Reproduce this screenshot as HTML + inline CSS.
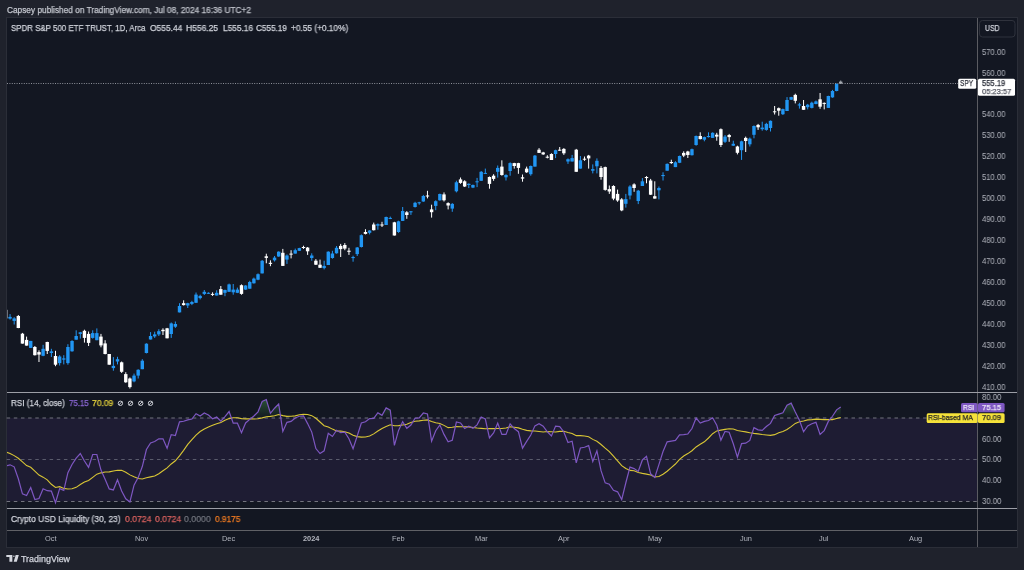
<!DOCTYPE html>
<html><head><meta charset="utf-8">
<style>
*{margin:0;padding:0;box-sizing:border-box}
html,body{width:1024px;height:570px;overflow:hidden;background:#1f222c;font-family:"Liberation Sans",sans-serif}
.abs{position:absolute}
.t{position:absolute;white-space:pre;line-height:12px;transform-origin:0 50%;will-change:transform;-webkit-text-stroke:0.25px currentColor}
.frame{position:absolute;left:6px;top:17px;width:1012px;height:531px;background:#131722;border:1px solid #2b2e38}
svg{position:absolute;left:0;top:0}
.ns{-webkit-text-stroke:0}
</style></head><body>
<div class="frame"></div>

<svg width="1024" height="570" viewBox="0 0 1024 570">
  <defs><clipPath id="cm"><rect x="7" y="18" width="970" height="374"/></clipPath>
  <linearGradient id="gg" gradientUnits="userSpaceOnUse" x1="0" y1="370" x2="0" y2="418"><stop offset="0" stop-color="#4caf50" stop-opacity="1"/><stop offset="1" stop-color="#4caf50" stop-opacity="0"/></linearGradient>
  <clipPath id="cover"><rect x="7" y="393" width="970" height="25"/></clipPath>
  <clipPath id="cr"><rect x="7" y="393" width="970" height="115"/></clipPath></defs>
  <!-- RSI band -->
  <rect x="7" y="418" width="970" height="83.3" fill="#1e1c33"/>
  <line x1="6.65" y1="418" x2="977" y2="418" stroke="#73747e" stroke-width="1" stroke-dasharray="3.5,3.66"/>
  <line x1="6.65" y1="459.5" x2="977" y2="459.5" stroke="#5a5b6c" stroke-width="1" stroke-dasharray="3.5,3.66"/>
  <line x1="6.65" y1="501.5" x2="977" y2="501.5" stroke="#73747e" stroke-width="1" stroke-dasharray="3.5,3.66"/>
  <g clip-path="url(#cover)"><polygon points="5.92,418 5.92,465.77 10.05,464.81 14.18,466.82 18.32,478.77 22.45,493.86 26.58,495.54 30.72,487.53 34.85,499.56 38.98,498.54 43.11,488.72 47.25,490.67 51.38,491.06 55.51,502.78 59.65,488.63 63.78,490.39 67.91,472.66 72.04,464.53 76.18,458.13 80.31,453.55 84.44,461.01 88.58,467.29 92.71,454.48 96.84,454.48 100.97,470.08 105.11,479.18 109.24,488.92 113.37,489.95 117.50,479.69 121.64,490.94 125.77,498.75 129.90,502.01 134.04,485.21 138.17,477.60 142.30,466.58 146.43,449.50 150.57,442.93 154.70,441.58 158.83,438.82 162.97,438.82 167.10,448.32 171.23,434.65 175.36,435.47 179.50,421.84 183.63,421.23 187.76,419.90 191.90,419.02 196.03,413.75 200.16,416.06 204.29,413.03 208.43,414.97 212.56,418.79 216.69,417.08 220.82,421.20 224.96,416.59 229.09,411.54 233.22,423.10 237.36,423.10 241.49,432.64 245.62,422.96 249.75,419.35 253.89,415.97 258.02,411.81 262.15,401.43 266.29,399.53 270.42,413.26 274.55,408.23 278.68,403.97 282.82,431.46 286.95,422.34 291.08,421.44 295.22,417.96 299.35,416.24 303.48,415.81 307.61,423.61 311.75,432.09 315.88,448.55 320.01,453.55 324.14,450.81 328.28,433.30 332.41,436.48 336.54,430.23 340.68,432.70 344.81,432.11 348.94,438.68 353.07,448.71 357.21,435.96 361.34,423.04 365.47,421.83 369.61,418.63 373.74,418.34 377.87,412.72 382.00,415.33 386.14,407.92 390.27,410.12 394.40,445.43 398.54,430.40 402.67,421.73 406.80,428.26 410.93,425.06 415.07,418.22 419.20,417.84 423.33,413.00 427.46,413.99 431.60,441.13 435.73,430.78 439.86,424.87 444.00,434.40 448.13,441.84 452.26,440.22 456.39,422.03 460.53,422.93 464.66,428.48 468.79,426.22 472.93,428.22 477.06,424.85 481.19,416.96 485.32,419.00 489.46,437.87 493.59,432.91 497.72,423.23 501.86,434.42 505.99,434.42 510.12,423.79 514.25,428.55 518.39,431.71 522.52,448.15 526.65,441.35 530.78,435.05 534.92,425.87 539.05,423.67 543.18,426.23 547.32,431.77 551.45,435.94 555.58,426.09 559.71,426.64 563.85,431.94 567.98,442.58 572.11,441.18 576.25,462.78 580.38,448.00 584.51,447.29 588.64,445.67 592.78,461.58 596.91,450.82 601.04,470.64 605.18,482.83 609.31,484.22 613.44,490.26 617.57,491.84 621.71,499.56 625.84,482.76 629.97,467.11 634.10,468.60 638.24,471.38 642.37,459.93 646.50,456.28 650.64,473.82 654.77,477.38 658.90,464.68 663.03,451.46 667.17,441.84 671.30,441.17 675.43,440.46 679.57,434.90 683.70,434.55 687.83,433.98 691.96,428.54 696.10,417.92 700.23,423.07 704.36,421.44 708.50,420.51 712.63,417.77 716.76,425.20 720.89,440.19 725.03,431.32 729.16,432.20 733.29,443.71 737.42,457.21 741.56,443.54 745.69,443.21 749.82,440.45 753.96,427.62 758.09,429.86 762.22,430.41 766.35,426.55 770.49,423.39 774.62,415.50 778.75,414.12 782.89,412.70 787.02,405.30 791.15,403.18 795.28,411.99 799.42,420.23 803.55,431.81 807.68,426.00 811.82,423.80 815.95,422.34 820.08,434.42 824.21,430.62 828.35,421.41 832.48,416.26 836.61,409.85 840.74,406.94 840.74,418" fill="url(#gg)"/></g>
  <g clip-path="url(#cr)">
  <polyline points="5.92,451.81 10.05,453.61 14.18,455.62 18.32,458.27 22.45,461.92 26.58,465.54 30.72,467.32 34.85,471.07 38.98,475.06 43.11,477.14 47.25,479.82 51.38,484.31 55.51,487.48 59.65,486.65 63.78,488.41 67.91,488.97 72.04,488.80 76.18,487.33 80.31,484.45 84.44,481.98 88.58,480.54 92.71,477.32 96.84,474.17 100.97,472.84 105.11,472.02 109.24,471.87 113.37,470.95 117.50,470.31 121.64,470.35 125.77,472.21 129.90,474.89 134.04,476.82 138.17,478.54 142.30,478.94 146.43,477.67 150.57,476.84 154.70,475.92 158.83,473.69 162.97,470.81 167.10,467.91 171.23,463.96 175.36,460.80 179.50,455.86 183.63,450.33 187.76,444.46 191.90,439.73 196.03,435.17 200.16,431.56 204.29,428.96 208.43,426.96 212.56,425.33 216.69,423.78 220.82,422.52 224.96,420.26 229.09,418.61 233.22,417.72 237.36,417.81 241.49,418.63 245.62,418.85 249.75,418.87 253.89,419.03 258.02,418.72 262.15,417.90 266.29,416.79 270.42,416.40 274.55,415.77 278.68,414.53 282.82,415.60 286.95,416.37 291.08,416.25 295.22,415.88 299.35,414.71 303.48,414.20 307.61,414.50 311.75,415.66 315.88,418.28 320.01,422.00 324.14,425.67 328.28,427.10 332.41,429.12 336.54,430.99 340.68,431.08 344.81,431.78 348.94,433.01 353.07,435.21 357.21,436.61 361.34,437.13 365.47,437.00 369.61,436.04 373.74,433.88 377.87,430.97 382.00,428.43 386.14,426.62 390.27,424.74 394.40,425.82 398.54,425.66 402.67,424.92 406.80,424.17 410.93,422.48 415.07,421.22 419.20,420.84 423.33,420.21 427.46,419.88 431.60,421.51 435.73,422.80 439.86,423.48 444.00,425.37 448.13,427.64 452.26,427.27 456.39,426.67 460.53,426.75 464.66,426.77 468.79,426.85 472.93,427.57 477.06,428.07 481.19,428.35 485.32,428.71 489.46,428.48 493.59,428.63 497.72,428.51 501.86,428.51 505.99,427.98 510.12,426.81 514.25,427.27 518.39,427.90 522.52,429.31 526.65,430.39 530.78,430.87 534.92,430.95 539.05,431.43 543.18,431.94 547.32,431.51 551.45,431.72 555.58,431.93 559.71,431.37 563.85,431.20 567.98,432.54 572.11,433.44 576.25,435.66 580.38,435.65 584.51,436.07 588.64,436.83 592.78,439.38 596.91,441.32 601.04,444.49 605.18,448.14 609.31,451.59 613.44,456.17 617.57,460.83 621.71,465.66 625.84,468.53 629.97,470.38 634.10,470.80 638.24,472.47 642.37,473.37 646.50,474.13 650.64,475.00 654.77,476.90 658.90,476.48 663.03,474.23 667.17,471.21 671.30,467.70 675.43,464.03 679.57,459.41 683.70,455.97 687.83,453.60 691.96,450.74 696.10,446.92 700.23,444.29 704.36,441.80 708.50,437.99 712.63,433.73 716.76,430.91 720.89,430.11 725.03,429.36 729.16,428.72 733.29,428.95 737.42,430.54 741.56,431.19 745.69,431.85 749.82,432.70 753.96,433.39 758.09,433.87 762.22,434.52 766.35,434.95 770.49,435.35 774.62,434.65 778.75,432.79 782.89,431.46 787.02,429.54 791.15,426.65 795.28,423.42 799.42,421.75 803.55,420.94 807.68,419.90 811.82,419.63 815.95,419.09 820.08,419.38 824.21,419.67 828.35,419.53 832.48,419.58 836.61,418.55 840.74,417.51" fill="none" stroke="#d9c635" stroke-width="1.1"/>
  <polyline points="5.92,465.77 10.05,464.81 14.18,466.82 18.32,478.77 22.45,493.86 26.58,495.54 30.72,487.53 34.85,499.56 38.98,498.54 43.11,488.72 47.25,490.67 51.38,491.06 55.51,502.78 59.65,488.63 63.78,490.39 67.91,472.66 72.04,464.53 76.18,458.13 80.31,453.55 84.44,461.01 88.58,467.29 92.71,454.48 96.84,454.48 100.97,470.08 105.11,479.18 109.24,488.92 113.37,489.95 117.50,479.69 121.64,490.94 125.77,498.75 129.90,502.01 134.04,485.21 138.17,477.60 142.30,466.58 146.43,449.50 150.57,442.93 154.70,441.58 158.83,438.82 162.97,438.82 167.10,448.32 171.23,434.65 175.36,435.47 179.50,421.84 183.63,421.23 187.76,419.90 191.90,419.02 196.03,413.75 200.16,416.06 204.29,413.03 208.43,414.97 212.56,418.79 216.69,417.08 220.82,421.20 224.96,416.59 229.09,411.54 233.22,423.10 237.36,423.10 241.49,432.64 245.62,422.96 249.75,419.35 253.89,415.97 258.02,411.81 262.15,401.43 266.29,399.53 270.42,413.26 274.55,408.23 278.68,403.97 282.82,431.46 286.95,422.34 291.08,421.44 295.22,417.96 299.35,416.24 303.48,415.81 307.61,423.61 311.75,432.09 315.88,448.55 320.01,453.55 324.14,450.81 328.28,433.30 332.41,436.48 336.54,430.23 340.68,432.70 344.81,432.11 348.94,438.68 353.07,448.71 357.21,435.96 361.34,423.04 365.47,421.83 369.61,418.63 373.74,418.34 377.87,412.72 382.00,415.33 386.14,407.92 390.27,410.12 394.40,445.43 398.54,430.40 402.67,421.73 406.80,428.26 410.93,425.06 415.07,418.22 419.20,417.84 423.33,413.00 427.46,413.99 431.60,441.13 435.73,430.78 439.86,424.87 444.00,434.40 448.13,441.84 452.26,440.22 456.39,422.03 460.53,422.93 464.66,428.48 468.79,426.22 472.93,428.22 477.06,424.85 481.19,416.96 485.32,419.00 489.46,437.87 493.59,432.91 497.72,423.23 501.86,434.42 505.99,434.42 510.12,423.79 514.25,428.55 518.39,431.71 522.52,448.15 526.65,441.35 530.78,435.05 534.92,425.87 539.05,423.67 543.18,426.23 547.32,431.77 551.45,435.94 555.58,426.09 559.71,426.64 563.85,431.94 567.98,442.58 572.11,441.18 576.25,462.78 580.38,448.00 584.51,447.29 588.64,445.67 592.78,461.58 596.91,450.82 601.04,470.64 605.18,482.83 609.31,484.22 613.44,490.26 617.57,491.84 621.71,499.56 625.84,482.76 629.97,467.11 634.10,468.60 638.24,471.38 642.37,459.93 646.50,456.28 650.64,473.82 654.77,477.38 658.90,464.68 663.03,451.46 667.17,441.84 671.30,441.17 675.43,440.46 679.57,434.90 683.70,434.55 687.83,433.98 691.96,428.54 696.10,417.92 700.23,423.07 704.36,421.44 708.50,420.51 712.63,417.77 716.76,425.20 720.89,440.19 725.03,431.32 729.16,432.20 733.29,443.71 737.42,457.21 741.56,443.54 745.69,443.21 749.82,440.45 753.96,427.62 758.09,429.86 762.22,430.41 766.35,426.55 770.49,423.39 774.62,415.50 778.75,414.12 782.89,412.70 787.02,405.30 791.15,403.18 795.28,411.99 799.42,420.23 803.55,431.81 807.68,426.00 811.82,423.80 815.95,422.34 820.08,434.42 824.21,430.62 828.35,421.41 832.48,416.26 836.61,409.85 840.74,406.94" fill="none" stroke="#7e57c2" stroke-width="1.2"/>
  </g>
  <!-- separators -->
  <line x1="977.5" y1="18" x2="977.5" y2="547" stroke="#5b5c62" stroke-width="1"/>
  <line x1="7" y1="392.5" x2="1017" y2="392.5" stroke="#9c9ea6" stroke-width="1"/>
  <line x1="7" y1="508.5" x2="1017" y2="508.5" stroke="#9c9ea6" stroke-width="1"/>
  <line x1="7" y1="530.5" x2="1017" y2="530.5" stroke="#606166" stroke-width="1"/>
  <!-- dotted price line -->
  <line x1="7" y1="83.5" x2="958" y2="83.5" stroke="#8d9099" stroke-width="1" stroke-dasharray="1,1.4"/>
  <g clip-path="url(#cm)">
<rect x="5.42" y="309.80" width="1" height="8.60" fill="#a4a8b0"/>
<rect x="4.22" y="309.80" width="3.4" height="8.60" fill="#a4a8b0"/>
<rect x="9.55" y="314.10" width="1" height="5.50" fill="#2196f3"/>
<rect x="8.35" y="316.90" width="3.4" height="1.70" fill="#2196f3"/>
<rect x="13.68" y="317.20" width="1" height="7.30" fill="#2196f3"/>
<rect x="12.48" y="318.40" width="3.4" height="2.50" fill="#2196f3"/>
<rect x="17.82" y="315.00" width="1" height="13.20" fill="#ffffff"/>
<rect x="16.62" y="316.00" width="3.4" height="12.00" fill="#ffffff"/>
<rect x="21.95" y="332.90" width="1" height="10.70" fill="#ffffff"/>
<rect x="20.75" y="333.70" width="3.4" height="9.90" fill="#ffffff"/>
<rect x="26.08" y="336.60" width="1" height="9.00" fill="#ffffff"/>
<rect x="24.88" y="339.90" width="3.4" height="5.70" fill="#ffffff"/>
<rect x="30.22" y="340.90" width="1" height="7.00" fill="#2196f3"/>
<rect x="29.02" y="340.90" width="3.4" height="7.00" fill="#2196f3"/>
<rect x="34.35" y="346.00" width="1" height="9.50" fill="#ffffff"/>
<rect x="33.15" y="347.00" width="3.4" height="8.20" fill="#ffffff"/>
<rect x="38.48" y="350.30" width="1" height="11.70" fill="#ffffff"/>
<rect x="37.28" y="352.10" width="3.4" height="2.50" fill="#ffffff"/>
<rect x="42.61" y="344.80" width="1" height="11.40" fill="#2196f3"/>
<rect x="41.41" y="348.80" width="3.4" height="7.00" fill="#2196f3"/>
<rect x="46.75" y="341.70" width="1" height="12.30" fill="#ffffff"/>
<rect x="45.55" y="342.00" width="3.4" height="8.90" fill="#ffffff"/>
<rect x="50.88" y="348.80" width="1" height="8.20" fill="#2196f3"/>
<rect x="49.68" y="351.30" width="3.4" height="1.70" fill="#2196f3"/>
<rect x="55.01" y="350.80" width="1" height="15.40" fill="#ffffff"/>
<rect x="53.81" y="356.00" width="3.4" height="8.70" fill="#ffffff"/>
<rect x="59.15" y="355.20" width="1" height="10.30" fill="#2196f3"/>
<rect x="57.95" y="356.50" width="3.4" height="6.60" fill="#2196f3"/>
<rect x="63.28" y="355.20" width="1" height="9.20" fill="#2196f3"/>
<rect x="62.08" y="358.40" width="3.4" height="1.20" fill="#2196f3"/>
<rect x="67.41" y="344.20" width="1" height="20.50" fill="#2196f3"/>
<rect x="66.21" y="347.00" width="3.4" height="16.10" fill="#2196f3"/>
<rect x="71.54" y="340.20" width="1" height="11.50" fill="#2196f3"/>
<rect x="70.34" y="341.00" width="3.4" height="10.30" fill="#2196f3"/>
<rect x="75.68" y="330.30" width="1" height="9.40" fill="#2196f3"/>
<rect x="74.48" y="336.00" width="3.4" height="3.70" fill="#2196f3"/>
<rect x="79.81" y="331.90" width="1" height="6.70" fill="#2196f3"/>
<rect x="78.61" y="332.30" width="3.4" height="1.60" fill="#2196f3"/>
<rect x="83.94" y="329.70" width="1" height="12.90" fill="#ffffff"/>
<rect x="82.74" y="330.80" width="3.4" height="7.10" fill="#ffffff"/>
<rect x="88.08" y="331.50" width="1" height="14.50" fill="#ffffff"/>
<rect x="86.88" y="333.90" width="3.4" height="9.00" fill="#ffffff"/>
<rect x="92.21" y="330.30" width="1" height="8.30" fill="#2196f3"/>
<rect x="91.01" y="333.10" width="3.4" height="4.80" fill="#2196f3"/>
<rect x="96.34" y="328.40" width="1" height="11.80" fill="#2196f3"/>
<rect x="95.14" y="333.10" width="3.4" height="7.10" fill="#2196f3"/>
<rect x="100.47" y="333.90" width="1" height="13.40" fill="#ffffff"/>
<rect x="99.27" y="336.60" width="3.4" height="8.80" fill="#ffffff"/>
<rect x="104.61" y="340.20" width="1" height="14.20" fill="#ffffff"/>
<rect x="103.41" y="343.40" width="3.4" height="10.60" fill="#ffffff"/>
<rect x="108.74" y="354.00" width="1" height="10.70" fill="#ffffff"/>
<rect x="107.54" y="354.00" width="3.4" height="10.70" fill="#ffffff"/>
<rect x="112.87" y="357.10" width="1" height="13.60" fill="#2196f3"/>
<rect x="111.67" y="365.90" width="3.4" height="2.20" fill="#2196f3"/>
<rect x="117.00" y="356.80" width="1" height="7.60" fill="#2196f3"/>
<rect x="115.80" y="359.20" width="3.4" height="2.30" fill="#2196f3"/>
<rect x="121.14" y="361.50" width="1" height="11.40" fill="#ffffff"/>
<rect x="119.94" y="362.30" width="3.4" height="9.50" fill="#ffffff"/>
<rect x="125.27" y="372.20" width="1" height="10.60" fill="#ffffff"/>
<rect x="124.07" y="374.10" width="3.4" height="8.20" fill="#ffffff"/>
<rect x="129.40" y="377.50" width="1" height="11.00" fill="#ffffff"/>
<rect x="128.20" y="378.50" width="3.4" height="8.60" fill="#ffffff"/>
<rect x="133.54" y="373.60" width="1" height="8.70" fill="#2196f3"/>
<rect x="132.34" y="375.60" width="3.4" height="5.80" fill="#2196f3"/>
<rect x="137.67" y="369.20" width="1" height="9.30" fill="#2196f3"/>
<rect x="136.47" y="369.80" width="3.4" height="5.80" fill="#2196f3"/>
<rect x="141.80" y="359.20" width="1" height="10.00" fill="#2196f3"/>
<rect x="140.60" y="360.70" width="3.4" height="8.50" fill="#2196f3"/>
<rect x="145.93" y="343.30" width="1" height="10.10" fill="#2196f3"/>
<rect x="144.73" y="343.70" width="3.4" height="9.30" fill="#2196f3"/>
<rect x="150.07" y="332.10" width="1" height="7.40" fill="#2196f3"/>
<rect x="148.87" y="336.00" width="3.4" height="3.50" fill="#2196f3"/>
<rect x="154.20" y="331.70" width="1" height="6.20" fill="#2196f3"/>
<rect x="153.00" y="334.40" width="3.4" height="2.00" fill="#2196f3"/>
<rect x="158.33" y="329.20" width="1" height="6.80" fill="#2196f3"/>
<rect x="157.13" y="331.20" width="3.4" height="3.20" fill="#2196f3"/>
<rect x="162.47" y="328.30" width="1" height="6.70" fill="#ffffff"/>
<rect x="161.27" y="329.80" width="3.4" height="1.40" fill="#ffffff"/>
<rect x="166.60" y="327.90" width="1" height="10.40" fill="#ffffff"/>
<rect x="165.40" y="328.30" width="3.4" height="10.00" fill="#ffffff"/>
<rect x="170.73" y="322.50" width="1" height="15.40" fill="#2196f3"/>
<rect x="169.53" y="323.40" width="3.4" height="10.60" fill="#2196f3"/>
<rect x="174.86" y="321.50" width="1" height="6.40" fill="#2196f3"/>
<rect x="173.66" y="324.00" width="3.4" height="2.70" fill="#2196f3"/>
<rect x="179.00" y="303.20" width="1" height="9.20" fill="#2196f3"/>
<rect x="177.80" y="306.00" width="3.4" height="6.40" fill="#2196f3"/>
<rect x="183.13" y="300.30" width="1" height="5.20" fill="#ffffff"/>
<rect x="181.93" y="303.20" width="3.4" height="1.90" fill="#ffffff"/>
<rect x="187.26" y="302.80" width="1" height="5.20" fill="#2196f3"/>
<rect x="186.06" y="303.20" width="3.4" height="2.30" fill="#2196f3"/>
<rect x="191.40" y="300.80" width="1" height="4.30" fill="#2196f3"/>
<rect x="190.20" y="302.00" width="3.4" height="1.90" fill="#2196f3"/>
<rect x="195.53" y="292.50" width="1" height="10.40" fill="#2196f3"/>
<rect x="194.33" y="294.60" width="3.4" height="8.20" fill="#2196f3"/>
<rect x="199.66" y="294.70" width="1" height="4.70" fill="#2196f3"/>
<rect x="198.46" y="295.90" width="3.4" height="2.20" fill="#2196f3"/>
<rect x="203.79" y="290.00" width="1" height="5.00" fill="#2196f3"/>
<rect x="202.59" y="291.80" width="3.4" height="2.10" fill="#2196f3"/>
<rect x="207.93" y="292.30" width="1" height="1.60" fill="#2196f3"/>
<rect x="206.73" y="292.80" width="3.4" height="1.00" fill="#2196f3"/>
<rect x="212.06" y="292.30" width="1" height="3.60" fill="#ffffff"/>
<rect x="210.86" y="293.90" width="3.4" height="1.00" fill="#ffffff"/>
<rect x="216.19" y="290.30" width="1" height="5.20" fill="#2196f3"/>
<rect x="214.99" y="292.80" width="3.4" height="2.70" fill="#2196f3"/>
<rect x="220.32" y="286.00" width="1" height="8.70" fill="#ffffff"/>
<rect x="219.12" y="289.10" width="3.4" height="5.60" fill="#ffffff"/>
<rect x="224.46" y="289.60" width="1" height="6.60" fill="#2196f3"/>
<rect x="223.26" y="290.00" width="3.4" height="2.80" fill="#2196f3"/>
<rect x="228.59" y="283.60" width="1" height="8.20" fill="#2196f3"/>
<rect x="227.39" y="284.40" width="3.4" height="7.40" fill="#2196f3"/>
<rect x="232.72" y="284.00" width="1" height="10.70" fill="#2196f3"/>
<rect x="231.52" y="289.60" width="3.4" height="2.70" fill="#2196f3"/>
<rect x="236.86" y="287.60" width="1" height="5.50" fill="#2196f3"/>
<rect x="235.66" y="289.60" width="3.4" height="3.20" fill="#2196f3"/>
<rect x="240.99" y="284.40" width="1" height="10.30" fill="#ffffff"/>
<rect x="239.79" y="285.20" width="3.4" height="8.70" fill="#ffffff"/>
<rect x="245.12" y="285.20" width="1" height="4.70" fill="#2196f3"/>
<rect x="243.92" y="285.50" width="3.4" height="4.10" fill="#2196f3"/>
<rect x="249.25" y="280.80" width="1" height="7.90" fill="#2196f3"/>
<rect x="248.05" y="282.00" width="3.4" height="6.70" fill="#2196f3"/>
<rect x="253.39" y="277.60" width="1" height="6.00" fill="#2196f3"/>
<rect x="252.19" y="278.60" width="3.4" height="4.70" fill="#2196f3"/>
<rect x="257.52" y="273.40" width="1" height="6.80" fill="#2196f3"/>
<rect x="256.32" y="274.20" width="3.4" height="5.50" fill="#2196f3"/>
<rect x="261.65" y="260.00" width="1" height="13.40" fill="#2196f3"/>
<rect x="260.45" y="260.80" width="3.4" height="12.60" fill="#2196f3"/>
<rect x="265.79" y="253.70" width="1" height="9.60" fill="#ffffff"/>
<rect x="264.59" y="256.30" width="3.4" height="1.60" fill="#ffffff"/>
<rect x="269.92" y="260.30" width="1" height="5.90" fill="#ffffff"/>
<rect x="268.72" y="262.80" width="3.4" height="1.10" fill="#ffffff"/>
<rect x="274.05" y="256.00" width="1" height="5.50" fill="#2196f3"/>
<rect x="272.85" y="257.60" width="3.4" height="2.70" fill="#2196f3"/>
<rect x="278.18" y="251.30" width="1" height="5.50" fill="#2196f3"/>
<rect x="276.98" y="251.70" width="3.4" height="4.80" fill="#2196f3"/>
<rect x="282.32" y="248.90" width="1" height="17.00" fill="#ffffff"/>
<rect x="281.12" y="252.80" width="3.4" height="13.10" fill="#ffffff"/>
<rect x="286.45" y="254.40" width="1" height="9.50" fill="#2196f3"/>
<rect x="285.25" y="255.50" width="3.4" height="4.10" fill="#2196f3"/>
<rect x="290.58" y="250.20" width="1" height="8.20" fill="#ffffff"/>
<rect x="289.38" y="253.60" width="3.4" height="1.00" fill="#ffffff"/>
<rect x="294.72" y="248.60" width="1" height="5.00" fill="#2196f3"/>
<rect x="293.52" y="250.20" width="3.4" height="3.40" fill="#2196f3"/>
<rect x="298.85" y="247.80" width="1" height="3.20" fill="#2196f3"/>
<rect x="297.65" y="248.10" width="3.4" height="2.70" fill="#2196f3"/>
<rect x="302.98" y="245.70" width="1" height="3.20" fill="#ffffff"/>
<rect x="301.78" y="247.00" width="3.4" height="1.00" fill="#ffffff"/>
<rect x="307.11" y="247.00" width="1" height="7.90" fill="#ffffff"/>
<rect x="305.91" y="247.60" width="3.4" height="3.70" fill="#ffffff"/>
<rect x="311.25" y="253.30" width="1" height="7.40" fill="#2196f3"/>
<rect x="310.05" y="255.50" width="3.4" height="2.50" fill="#2196f3"/>
<rect x="315.38" y="259.10" width="1" height="5.90" fill="#ffffff"/>
<rect x="314.18" y="260.70" width="3.4" height="4.00" fill="#ffffff"/>
<rect x="319.51" y="259.60" width="1" height="8.20" fill="#ffffff"/>
<rect x="318.31" y="264.70" width="3.4" height="3.10" fill="#ffffff"/>
<rect x="323.64" y="260.70" width="1" height="8.70" fill="#2196f3"/>
<rect x="322.44" y="265.90" width="3.4" height="2.20" fill="#2196f3"/>
<rect x="327.78" y="251.30" width="1" height="13.70" fill="#2196f3"/>
<rect x="326.58" y="251.70" width="3.4" height="13.30" fill="#2196f3"/>
<rect x="331.91" y="250.80" width="1" height="7.90" fill="#2196f3"/>
<rect x="330.71" y="253.50" width="3.4" height="4.50" fill="#2196f3"/>
<rect x="336.04" y="246.00" width="1" height="7.60" fill="#2196f3"/>
<rect x="334.84" y="247.80" width="3.4" height="5.50" fill="#2196f3"/>
<rect x="340.18" y="243.90" width="1" height="13.10" fill="#ffffff"/>
<rect x="338.98" y="245.90" width="3.4" height="3.20" fill="#ffffff"/>
<rect x="344.31" y="243.10" width="1" height="7.10" fill="#ffffff"/>
<rect x="343.11" y="245.00" width="3.4" height="3.60" fill="#ffffff"/>
<rect x="348.44" y="247.80" width="1" height="7.10" fill="#ffffff"/>
<rect x="347.24" y="250.70" width="3.4" height="1.10" fill="#ffffff"/>
<rect x="352.57" y="255.70" width="1" height="6.00" fill="#2196f3"/>
<rect x="351.37" y="257.00" width="3.4" height="1.10" fill="#2196f3"/>
<rect x="356.71" y="247.00" width="1" height="9.00" fill="#2196f3"/>
<rect x="355.51" y="247.50" width="3.4" height="6.60" fill="#2196f3"/>
<rect x="360.84" y="234.40" width="1" height="13.10" fill="#2196f3"/>
<rect x="359.64" y="235.20" width="3.4" height="11.80" fill="#2196f3"/>
<rect x="364.97" y="229.20" width="1" height="5.20" fill="#ffffff"/>
<rect x="363.77" y="232.00" width="3.4" height="1.90" fill="#ffffff"/>
<rect x="369.11" y="230.20" width="1" height="4.20" fill="#2196f3"/>
<rect x="367.91" y="230.50" width="3.4" height="2.30" fill="#2196f3"/>
<rect x="373.24" y="222.60" width="1" height="7.90" fill="#ffffff"/>
<rect x="372.04" y="224.50" width="3.4" height="5.70" fill="#ffffff"/>
<rect x="377.37" y="223.40" width="1" height="6.30" fill="#2196f3"/>
<rect x="376.17" y="224.20" width="3.4" height="1.50" fill="#2196f3"/>
<rect x="381.50" y="221.80" width="1" height="5.20" fill="#ffffff"/>
<rect x="380.30" y="224.50" width="3.4" height="1.00" fill="#ffffff"/>
<rect x="385.64" y="216.60" width="1" height="8.40" fill="#2196f3"/>
<rect x="384.44" y="217.00" width="3.4" height="8.00" fill="#2196f3"/>
<rect x="389.77" y="216.60" width="1" height="2.50" fill="#2196f3"/>
<rect x="388.57" y="217.90" width="3.4" height="1.00" fill="#2196f3"/>
<rect x="393.90" y="221.80" width="1" height="13.70" fill="#ffffff"/>
<rect x="392.70" y="222.30" width="3.4" height="13.20" fill="#ffffff"/>
<rect x="398.04" y="220.70" width="1" height="12.10" fill="#2196f3"/>
<rect x="396.84" y="221.30" width="3.4" height="10.70" fill="#2196f3"/>
<rect x="402.17" y="207.00" width="1" height="13.90" fill="#2196f3"/>
<rect x="400.97" y="211.00" width="3.4" height="9.90" fill="#2196f3"/>
<rect x="406.30" y="211.10" width="1" height="7.70" fill="#ffffff"/>
<rect x="405.10" y="212.30" width="3.4" height="2.70" fill="#ffffff"/>
<rect x="410.43" y="211.00" width="1" height="3.90" fill="#2196f3"/>
<rect x="409.23" y="211.30" width="3.4" height="1.00" fill="#2196f3"/>
<rect x="414.57" y="201.80" width="1" height="5.70" fill="#2196f3"/>
<rect x="413.37" y="202.80" width="3.4" height="4.20" fill="#2196f3"/>
<rect x="418.70" y="201.80" width="1" height="2.90" fill="#2196f3"/>
<rect x="417.50" y="202.30" width="3.4" height="1.00" fill="#2196f3"/>
<rect x="422.83" y="194.90" width="1" height="6.90" fill="#2196f3"/>
<rect x="421.63" y="196.00" width="3.4" height="5.50" fill="#2196f3"/>
<rect x="426.96" y="190.80" width="1" height="7.60" fill="#ffffff"/>
<rect x="425.76" y="195.50" width="3.4" height="1.00" fill="#ffffff"/>
<rect x="431.10" y="204.70" width="1" height="12.90" fill="#ffffff"/>
<rect x="429.90" y="209.40" width="3.4" height="2.80" fill="#ffffff"/>
<rect x="435.23" y="200.30" width="1" height="9.90" fill="#2196f3"/>
<rect x="434.03" y="201.20" width="3.4" height="4.70" fill="#2196f3"/>
<rect x="439.36" y="193.60" width="1" height="7.10" fill="#2196f3"/>
<rect x="438.16" y="194.00" width="3.4" height="6.30" fill="#2196f3"/>
<rect x="443.50" y="192.40" width="1" height="9.10" fill="#ffffff"/>
<rect x="442.30" y="194.40" width="3.4" height="5.90" fill="#ffffff"/>
<rect x="447.63" y="202.30" width="1" height="7.10" fill="#ffffff"/>
<rect x="446.43" y="203.10" width="3.4" height="2.40" fill="#ffffff"/>
<rect x="451.76" y="203.10" width="1" height="8.70" fill="#2196f3"/>
<rect x="450.56" y="203.90" width="3.4" height="4.70" fill="#2196f3"/>
<rect x="455.89" y="180.70" width="1" height="11.70" fill="#2196f3"/>
<rect x="454.69" y="182.30" width="3.4" height="9.00" fill="#2196f3"/>
<rect x="460.03" y="177.50" width="1" height="6.30" fill="#ffffff"/>
<rect x="458.83" y="179.40" width="3.4" height="3.50" fill="#ffffff"/>
<rect x="464.16" y="180.20" width="1" height="6.80" fill="#ffffff"/>
<rect x="462.96" y="181.30" width="3.4" height="5.20" fill="#ffffff"/>
<rect x="468.29" y="183.40" width="1" height="4.70" fill="#2196f3"/>
<rect x="467.09" y="183.80" width="3.4" height="1.20" fill="#2196f3"/>
<rect x="472.43" y="184.50" width="1" height="3.60" fill="#2196f3"/>
<rect x="471.23" y="185.00" width="3.4" height="2.60" fill="#2196f3"/>
<rect x="476.56" y="177.90" width="1" height="9.20" fill="#2196f3"/>
<rect x="475.36" y="181.30" width="3.4" height="1.00" fill="#2196f3"/>
<rect x="480.69" y="171.00" width="1" height="9.80" fill="#2196f3"/>
<rect x="479.49" y="171.80" width="3.4" height="9.00" fill="#2196f3"/>
<rect x="484.82" y="168.60" width="1" height="5.20" fill="#2196f3"/>
<rect x="483.62" y="172.90" width="3.4" height="1.00" fill="#2196f3"/>
<rect x="488.96" y="176.50" width="1" height="12.20" fill="#ffffff"/>
<rect x="487.76" y="177.00" width="3.4" height="6.90" fill="#ffffff"/>
<rect x="493.09" y="174.20" width="1" height="6.60" fill="#ffffff"/>
<rect x="491.89" y="175.70" width="3.4" height="3.20" fill="#ffffff"/>
<rect x="497.22" y="165.50" width="1" height="12.10" fill="#2196f3"/>
<rect x="496.02" y="167.90" width="3.4" height="3.90" fill="#2196f3"/>
<rect x="501.36" y="160.30" width="1" height="15.40" fill="#ffffff"/>
<rect x="500.16" y="166.60" width="3.4" height="8.40" fill="#ffffff"/>
<rect x="505.49" y="174.20" width="1" height="6.30" fill="#2196f3"/>
<rect x="504.29" y="175.00" width="3.4" height="2.30" fill="#2196f3"/>
<rect x="509.62" y="162.30" width="1" height="13.40" fill="#2196f3"/>
<rect x="508.42" y="163.10" width="3.4" height="7.90" fill="#2196f3"/>
<rect x="513.75" y="162.80" width="1" height="5.80" fill="#ffffff"/>
<rect x="512.55" y="163.10" width="3.4" height="2.90" fill="#ffffff"/>
<rect x="517.89" y="162.80" width="1" height="11.00" fill="#ffffff"/>
<rect x="516.69" y="163.10" width="3.4" height="4.80" fill="#ffffff"/>
<rect x="522.02" y="174.50" width="1" height="7.20" fill="#ffffff"/>
<rect x="520.82" y="177.30" width="3.4" height="1.30" fill="#ffffff"/>
<rect x="526.15" y="166.60" width="1" height="6.30" fill="#ffffff"/>
<rect x="524.95" y="168.60" width="3.4" height="3.70" fill="#ffffff"/>
<rect x="530.28" y="165.50" width="1" height="10.20" fill="#2196f3"/>
<rect x="529.08" y="166.00" width="3.4" height="8.20" fill="#2196f3"/>
<rect x="534.42" y="155.00" width="1" height="11.60" fill="#2196f3"/>
<rect x="533.22" y="155.60" width="3.4" height="11.00" fill="#2196f3"/>
<rect x="538.55" y="148.10" width="1" height="4.80" fill="#ffffff"/>
<rect x="537.35" y="149.70" width="3.4" height="3.20" fill="#ffffff"/>
<rect x="542.68" y="151.80" width="1" height="3.10" fill="#ffffff"/>
<rect x="541.48" y="152.40" width="3.4" height="2.00" fill="#ffffff"/>
<rect x="546.82" y="155.20" width="1" height="3.20" fill="#ffffff"/>
<rect x="545.62" y="156.70" width="3.4" height="1.00" fill="#ffffff"/>
<rect x="550.95" y="153.30" width="1" height="6.70" fill="#ffffff"/>
<rect x="549.75" y="154.00" width="3.4" height="6.00" fill="#ffffff"/>
<rect x="555.08" y="149.70" width="1" height="8.40" fill="#2196f3"/>
<rect x="553.88" y="150.20" width="3.4" height="3.80" fill="#2196f3"/>
<rect x="559.21" y="147.00" width="1" height="3.80" fill="#ffffff"/>
<rect x="558.01" y="149.70" width="3.4" height="1.00" fill="#ffffff"/>
<rect x="563.35" y="148.10" width="1" height="6.80" fill="#ffffff"/>
<rect x="562.15" y="148.90" width="3.4" height="4.40" fill="#ffffff"/>
<rect x="567.48" y="158.40" width="1" height="5.50" fill="#2196f3"/>
<rect x="566.28" y="159.20" width="3.4" height="2.30" fill="#2196f3"/>
<rect x="571.61" y="154.90" width="1" height="6.60" fill="#2196f3"/>
<rect x="570.41" y="158.10" width="3.4" height="3.40" fill="#2196f3"/>
<rect x="575.75" y="148.90" width="1" height="22.90" fill="#ffffff"/>
<rect x="574.55" y="149.70" width="3.4" height="22.10" fill="#ffffff"/>
<rect x="579.88" y="156.00" width="1" height="12.60" fill="#2196f3"/>
<rect x="578.68" y="160.30" width="3.4" height="8.30" fill="#2196f3"/>
<rect x="584.01" y="156.50" width="1" height="4.30" fill="#ffffff"/>
<rect x="582.81" y="158.70" width="3.4" height="1.00" fill="#ffffff"/>
<rect x="588.14" y="154.90" width="1" height="13.70" fill="#ffffff"/>
<rect x="586.94" y="155.60" width="3.4" height="2.80" fill="#ffffff"/>
<rect x="592.28" y="164.40" width="1" height="9.00" fill="#2196f3"/>
<rect x="591.08" y="169.10" width="3.4" height="1.60" fill="#2196f3"/>
<rect x="596.41" y="158.40" width="1" height="15.00" fill="#2196f3"/>
<rect x="595.21" y="160.80" width="3.4" height="5.50" fill="#2196f3"/>
<rect x="600.54" y="166.00" width="1" height="13.70" fill="#ffffff"/>
<rect x="599.34" y="167.90" width="3.4" height="9.10" fill="#ffffff"/>
<rect x="604.68" y="166.60" width="1" height="24.10" fill="#ffffff"/>
<rect x="603.48" y="167.10" width="3.4" height="22.80" fill="#ffffff"/>
<rect x="608.81" y="185.50" width="1" height="8.40" fill="#ffffff"/>
<rect x="607.61" y="189.10" width="3.4" height="2.40" fill="#ffffff"/>
<rect x="612.94" y="185.20" width="1" height="15.00" fill="#ffffff"/>
<rect x="611.74" y="186.00" width="3.4" height="12.60" fill="#ffffff"/>
<rect x="617.07" y="189.60" width="1" height="12.20" fill="#ffffff"/>
<rect x="615.87" y="193.90" width="3.4" height="6.60" fill="#ffffff"/>
<rect x="621.21" y="198.10" width="1" height="13.10" fill="#ffffff"/>
<rect x="620.01" y="199.40" width="3.4" height="11.00" fill="#ffffff"/>
<rect x="625.34" y="193.90" width="1" height="13.70" fill="#2196f3"/>
<rect x="624.14" y="199.10" width="3.4" height="4.70" fill="#2196f3"/>
<rect x="629.47" y="185.20" width="1" height="14.20" fill="#2196f3"/>
<rect x="628.27" y="186.50" width="3.4" height="9.00" fill="#2196f3"/>
<rect x="633.60" y="183.30" width="1" height="8.50" fill="#ffffff"/>
<rect x="632.40" y="184.40" width="3.4" height="3.60" fill="#ffffff"/>
<rect x="637.74" y="189.90" width="1" height="14.20" fill="#2196f3"/>
<rect x="636.54" y="190.70" width="3.4" height="10.30" fill="#2196f3"/>
<rect x="641.87" y="178.10" width="1" height="7.90" fill="#2196f3"/>
<rect x="640.67" y="181.30" width="3.4" height="4.70" fill="#2196f3"/>
<rect x="646.00" y="176.10" width="1" height="7.20" fill="#ffffff"/>
<rect x="644.80" y="177.00" width="3.4" height="1.10" fill="#ffffff"/>
<rect x="650.14" y="178.90" width="1" height="16.10" fill="#ffffff"/>
<rect x="648.94" y="180.50" width="3.4" height="14.20" fill="#ffffff"/>
<rect x="654.27" y="181.30" width="1" height="17.30" fill="#ffffff"/>
<rect x="653.07" y="196.20" width="3.4" height="2.40" fill="#ffffff"/>
<rect x="658.40" y="186.50" width="1" height="12.90" fill="#2196f3"/>
<rect x="657.20" y="188.00" width="3.4" height="2.30" fill="#2196f3"/>
<rect x="662.53" y="172.30" width="1" height="8.20" fill="#2196f3"/>
<rect x="661.33" y="175.00" width="3.4" height="1.10" fill="#2196f3"/>
<rect x="666.67" y="163.40" width="1" height="7.30" fill="#2196f3"/>
<rect x="665.47" y="163.90" width="3.4" height="6.80" fill="#2196f3"/>
<rect x="670.80" y="159.70" width="1" height="4.20" fill="#ffffff"/>
<rect x="669.60" y="162.00" width="3.4" height="1.10" fill="#ffffff"/>
<rect x="674.93" y="161.20" width="1" height="5.90" fill="#2196f3"/>
<rect x="673.73" y="162.30" width="3.4" height="4.80" fill="#2196f3"/>
<rect x="679.07" y="155.60" width="1" height="7.50" fill="#2196f3"/>
<rect x="677.87" y="156.00" width="3.4" height="6.80" fill="#2196f3"/>
<rect x="683.20" y="151.30" width="1" height="5.80" fill="#ffffff"/>
<rect x="682.00" y="152.90" width="3.4" height="2.70" fill="#ffffff"/>
<rect x="687.33" y="150.80" width="1" height="7.20" fill="#ffffff"/>
<rect x="686.13" y="151.50" width="3.4" height="3.50" fill="#ffffff"/>
<rect x="691.46" y="148.60" width="1" height="6.90" fill="#2196f3"/>
<rect x="690.26" y="149.20" width="3.4" height="6.00" fill="#2196f3"/>
<rect x="695.60" y="135.50" width="1" height="10.20" fill="#2196f3"/>
<rect x="694.40" y="136.00" width="3.4" height="9.00" fill="#2196f3"/>
<rect x="699.73" y="132.30" width="1" height="7.10" fill="#ffffff"/>
<rect x="698.53" y="136.00" width="3.4" height="3.10" fill="#ffffff"/>
<rect x="703.86" y="136.60" width="1" height="4.70" fill="#2196f3"/>
<rect x="702.66" y="137.10" width="3.4" height="2.60" fill="#2196f3"/>
<rect x="708.00" y="132.30" width="1" height="5.20" fill="#2196f3"/>
<rect x="706.80" y="136.00" width="3.4" height="1.10" fill="#2196f3"/>
<rect x="712.13" y="132.30" width="1" height="5.60" fill="#2196f3"/>
<rect x="710.93" y="132.80" width="3.4" height="5.10" fill="#2196f3"/>
<rect x="716.26" y="132.80" width="1" height="7.90" fill="#ffffff"/>
<rect x="715.06" y="134.70" width="3.4" height="1.90" fill="#ffffff"/>
<rect x="720.39" y="128.40" width="1" height="18.60" fill="#ffffff"/>
<rect x="719.19" y="129.20" width="3.4" height="15.80" fill="#ffffff"/>
<rect x="724.53" y="135.00" width="1" height="7.90" fill="#2196f3"/>
<rect x="723.33" y="136.60" width="3.4" height="5.20" fill="#2196f3"/>
<rect x="728.66" y="133.90" width="1" height="7.90" fill="#ffffff"/>
<rect x="727.46" y="135.00" width="3.4" height="2.10" fill="#ffffff"/>
<rect x="732.79" y="140.70" width="1" height="5.30" fill="#2196f3"/>
<rect x="731.59" y="143.80" width="3.4" height="1.90" fill="#2196f3"/>
<rect x="736.92" y="145.70" width="1" height="8.70" fill="#ffffff"/>
<rect x="735.72" y="146.50" width="3.4" height="6.30" fill="#ffffff"/>
<rect x="741.06" y="140.70" width="1" height="19.20" fill="#2196f3"/>
<rect x="739.86" y="141.30" width="3.4" height="8.90" fill="#2196f3"/>
<rect x="745.19" y="136.60" width="1" height="15.40" fill="#ffffff"/>
<rect x="743.99" y="137.90" width="3.4" height="3.10" fill="#ffffff"/>
<rect x="749.32" y="137.50" width="1" height="9.00" fill="#2196f3"/>
<rect x="748.12" y="138.60" width="3.4" height="5.70" fill="#2196f3"/>
<rect x="753.46" y="125.40" width="1" height="12.90" fill="#2196f3"/>
<rect x="752.26" y="126.00" width="3.4" height="8.80" fill="#2196f3"/>
<rect x="757.59" y="123.90" width="1" height="6.00" fill="#ffffff"/>
<rect x="756.39" y="124.90" width="3.4" height="2.40" fill="#ffffff"/>
<rect x="761.72" y="121.70" width="1" height="9.00" fill="#2196f3"/>
<rect x="760.52" y="127.60" width="3.4" height="1.60" fill="#2196f3"/>
<rect x="765.85" y="122.80" width="1" height="7.90" fill="#2196f3"/>
<rect x="764.65" y="123.90" width="3.4" height="6.00" fill="#2196f3"/>
<rect x="769.99" y="120.50" width="1" height="11.00" fill="#2196f3"/>
<rect x="768.79" y="120.80" width="3.4" height="7.20" fill="#2196f3"/>
<rect x="774.12" y="106.00" width="1" height="8.50" fill="#ffffff"/>
<rect x="772.92" y="111.30" width="3.4" height="1.00" fill="#ffffff"/>
<rect x="778.25" y="107.50" width="1" height="8.20" fill="#ffffff"/>
<rect x="777.05" y="108.20" width="3.4" height="2.50" fill="#ffffff"/>
<rect x="782.39" y="108.60" width="1" height="6.40" fill="#2196f3"/>
<rect x="781.19" y="109.10" width="3.4" height="5.10" fill="#2196f3"/>
<rect x="786.52" y="97.10" width="1" height="13.90" fill="#2196f3"/>
<rect x="785.32" y="100.00" width="3.4" height="11.00" fill="#2196f3"/>
<rect x="790.65" y="96.80" width="1" height="3.20" fill="#2196f3"/>
<rect x="789.45" y="97.10" width="3.4" height="2.60" fill="#2196f3"/>
<rect x="794.78" y="93.70" width="1" height="9.70" fill="#ffffff"/>
<rect x="793.58" y="94.90" width="3.4" height="5.90" fill="#ffffff"/>
<rect x="798.92" y="102.80" width="1" height="5.80" fill="#2196f3"/>
<rect x="797.72" y="104.40" width="3.4" height="1.10" fill="#2196f3"/>
<rect x="803.05" y="100.00" width="1" height="9.80" fill="#ffffff"/>
<rect x="801.85" y="106.00" width="3.4" height="3.80" fill="#ffffff"/>
<rect x="807.18" y="103.90" width="1" height="5.50" fill="#2196f3"/>
<rect x="805.98" y="104.70" width="3.4" height="2.50" fill="#2196f3"/>
<rect x="811.32" y="101.70" width="1" height="6.70" fill="#2196f3"/>
<rect x="810.12" y="102.70" width="3.4" height="5.20" fill="#2196f3"/>
<rect x="815.45" y="100.50" width="1" height="3.80" fill="#2196f3"/>
<rect x="814.25" y="101.40" width="3.4" height="2.60" fill="#2196f3"/>
<rect x="819.58" y="93.00" width="1" height="15.80" fill="#ffffff"/>
<rect x="818.38" y="99.30" width="3.4" height="7.40" fill="#ffffff"/>
<rect x="823.71" y="102.40" width="1" height="7.00" fill="#ffffff"/>
<rect x="822.51" y="102.90" width="3.4" height="1.00" fill="#ffffff"/>
<rect x="827.85" y="95.70" width="1" height="12.20" fill="#2196f3"/>
<rect x="826.65" y="96.00" width="3.4" height="11.90" fill="#2196f3"/>
<rect x="831.98" y="89.90" width="1" height="7.80" fill="#2196f3"/>
<rect x="830.78" y="91.00" width="3.4" height="6.40" fill="#2196f3"/>
<rect x="836.11" y="83.40" width="1" height="7.90" fill="#2196f3"/>
<rect x="834.91" y="84.00" width="3.4" height="7.00" fill="#2196f3"/>
<rect x="840.24" y="80.50" width="1" height="3.20" fill="#a4a8b0"/>
<rect x="839.04" y="81.60" width="3.4" height="2.10" fill="#a4a8b0"/>
  </g>
  <!-- USD box -->
  <rect x="979.5" y="20.5" width="35.5" height="16.5" rx="3" fill="none" stroke="#2f323c" stroke-width="1"/>
  <!-- SPY / price label -->
  <rect x="958.2" y="78.7" width="18" height="10" rx="1.5" fill="#ffffff"/>
  <rect x="978" y="78.7" width="37" height="17.1" rx="1.5" fill="#ffffff"/>
  <!-- RSI labels -->
  <rect x="961" y="403" width="16.5" height="9.3" rx="1.5" fill="#7e57c2"/>
  <rect x="978" y="403" width="26.6" height="9.3" rx="1.5" fill="#7e57c2"/>
  <rect x="926.7" y="413.2" width="50.8" height="9.8" rx="1.5" fill="#f5e23a"/>
  <rect x="978" y="413.2" width="26.6" height="9.8" rx="1.5" fill="#f5e23a"/>
  <!-- RSI legend icons -->
  <g fill="none" stroke="#c9ccd3" stroke-width="1">
    <circle cx="120.4" cy="403.3" r="2.2"/><line x1="118.6" y1="405.1" x2="122.2" y2="401.5"/>
    <circle cx="130.5" cy="403.3" r="2.2"/><line x1="128.7" y1="405.1" x2="132.3" y2="401.5"/>
    <circle cx="140.7" cy="403.3" r="2.2"/><line x1="138.9" y1="405.1" x2="142.5" y2="401.5"/>
    <circle cx="150.5" cy="403.3" r="2.2"/><line x1="148.7" y1="405.1" x2="152.3" y2="401.5"/>
  </g>
  <!-- TV logo -->
  <g fill="#d5d8df">
    <path d="M6.3 555 H12.35 V561.7 H9.4 V557.1 H6.3 Z"/>
    <circle cx="13.9" cy="556.2" r="0.75"/>
    <path d="M15.7 555 H18.8 L16.8 561.7 H13.7 Z"/>
  </g>
</svg>

<div class="t" style="left:6.53px;top:4.10px;font-size:8.3px;color:#c3c6ce;font-weight:normal;transform:scaleX(0.9976)">Capsey published on TradingView.com, Jul 08, 2024 16:36 UTC+2</div>
<div class="t" style="left:11.21px;top:22.20px;font-size:8.8px;color:#d1d4dc;font-weight:normal;transform:scaleX(0.8980)">SPDR S&amp;P 500 ETF TRUST, 1D, Arca</div>
<div class="t" style="left:149.50px;top:22.20px;font-size:8.8px;color:#d1d4dc;font-weight:normal;transform:scaleX(0.9567)">O555.44</div>
<div class="t" style="left:186.20px;top:22.20px;font-size:8.8px;color:#d1d4dc;font-weight:normal;transform:scaleX(0.9647)">H556.25</div>
<div class="t" style="left:222.50px;top:22.20px;font-size:8.8px;color:#d1d4dc;font-weight:normal;transform:scaleX(0.9427)">L555.16</div>
<div class="t" style="left:256.31px;top:22.20px;font-size:8.8px;color:#d1d4dc;font-weight:normal;transform:scaleX(0.9286)">C555.19</div>
<div class="t" style="left:291.11px;top:22.20px;font-size:8.8px;color:#d1d4dc;font-weight:normal;transform:scaleX(0.9429)">+0.55 (+0.10%)</div>
<div class="t" style="left:11.11px;top:397.30px;font-size:8.8px;color:#d1d4dc;font-weight:normal;transform:scaleX(0.9244)">RSI (14, close)</div>
<div class="t" style="left:68.60px;top:397.30px;font-size:8.8px;color:#8b67d4;font-weight:normal;transform:scaleX(0.8944)">75.15</div>
<div class="t" style="left:92.30px;top:397.30px;font-size:8.8px;color:#e3d13c;font-weight:normal;transform:scaleX(0.9670)">70.09</div>
<div class="t" style="left:11.21px;top:512.80px;font-size:8.8px;color:#d1d4dc;font-weight:normal;transform:scaleX(0.9578)">Crypto USD Liquidity (30, 23)</div>
<div class="t" style="left:124.60px;top:512.80px;font-size:8.8px;color:#d9625f;font-weight:normal;transform:scaleX(0.9808)">0.0724</div>
<div class="t" style="left:154.70px;top:512.80px;font-size:8.8px;color:#d9625f;font-weight:normal;transform:scaleX(0.9734)">0.0724</div>
<div class="t" style="left:184.41px;top:512.80px;font-size:8.8px;color:#6d7079;font-weight:normal;transform:scaleX(0.9957)">0.0000</div>
<div class="t" style="left:215.00px;top:512.80px;font-size:8.8px;color:#ee7a22;font-weight:normal;transform:scaleX(0.9436)">0.9175</div>
<div class="t" style="left:21.42px;top:552.90px;font-size:8.6px;color:#d1d4dc;font-weight:normal;transform:scaleX(1.0374)">TradingView</div>
<div class="t ns" style="left:982.24px;top:46.60px;font-size:8.2px;color:#b2b5be;font-weight:normal;transform:scaleX(0.9351)">570.00</div>
<div class="t ns" style="left:982.24px;top:67.56px;font-size:8.2px;color:#b2b5be;font-weight:normal;transform:scaleX(0.9351)">560.00</div>
<div class="t ns" style="left:982.24px;top:109.48px;font-size:8.2px;color:#b2b5be;font-weight:normal;transform:scaleX(0.9351)">540.00</div>
<div class="t ns" style="left:982.24px;top:130.44px;font-size:8.2px;color:#b2b5be;font-weight:normal;transform:scaleX(0.9351)">530.00</div>
<div class="t ns" style="left:982.24px;top:151.40px;font-size:8.2px;color:#b2b5be;font-weight:normal;transform:scaleX(0.9351)">520.00</div>
<div class="t ns" style="left:982.24px;top:172.36px;font-size:8.2px;color:#b2b5be;font-weight:normal;transform:scaleX(0.9351)">510.00</div>
<div class="t ns" style="left:982.24px;top:193.32px;font-size:8.2px;color:#b2b5be;font-weight:normal;transform:scaleX(0.9351)">500.00</div>
<div class="t ns" style="left:982.24px;top:214.28px;font-size:8.2px;color:#b2b5be;font-weight:normal;transform:scaleX(0.9351)">490.00</div>
<div class="t ns" style="left:982.24px;top:235.24px;font-size:8.2px;color:#b2b5be;font-weight:normal;transform:scaleX(0.9351)">480.00</div>
<div class="t ns" style="left:982.24px;top:256.20px;font-size:8.2px;color:#b2b5be;font-weight:normal;transform:scaleX(0.9351)">470.00</div>
<div class="t ns" style="left:982.24px;top:277.16px;font-size:8.2px;color:#b2b5be;font-weight:normal;transform:scaleX(0.9351)">460.00</div>
<div class="t ns" style="left:982.24px;top:298.12px;font-size:8.2px;color:#b2b5be;font-weight:normal;transform:scaleX(0.9351)">450.00</div>
<div class="t ns" style="left:982.24px;top:319.08px;font-size:8.2px;color:#b2b5be;font-weight:normal;transform:scaleX(0.9351)">440.00</div>
<div class="t ns" style="left:982.24px;top:340.04px;font-size:8.2px;color:#b2b5be;font-weight:normal;transform:scaleX(0.9351)">430.00</div>
<div class="t ns" style="left:982.24px;top:361.00px;font-size:8.2px;color:#b2b5be;font-weight:normal;transform:scaleX(0.9351)">420.00</div>
<div class="t ns" style="left:982.24px;top:381.96px;font-size:8.2px;color:#b2b5be;font-weight:normal;transform:scaleX(0.9351)">410.00</div>
<div class="t ns" style="left:982.24px;top:391.60px;font-size:8.2px;color:#b2b5be;font-weight:normal;transform:scaleX(0.9426)">80.00</div>
<div class="t ns" style="left:982.24px;top:433.70px;font-size:8.2px;color:#b2b5be;font-weight:normal;transform:scaleX(0.9426)">60.00</div>
<div class="t ns" style="left:982.24px;top:454.20px;font-size:8.2px;color:#b2b5be;font-weight:normal;transform:scaleX(0.9426)">50.00</div>
<div class="t ns" style="left:982.24px;top:474.90px;font-size:8.2px;color:#b2b5be;font-weight:normal;transform:scaleX(0.9426)">40.00</div>
<div class="t ns" style="left:982.24px;top:495.70px;font-size:8.2px;color:#b2b5be;font-weight:normal;transform:scaleX(0.9426)">30.00</div>
<div class="t" style="left:985.14px;top:23.00px;font-size:8.2px;color:#d1d4dc;font-weight:normal;transform:scaleX(0.8454)">USD</div>
<div class="t" style="left:960.34px;top:77.50px;font-size:8.2px;color:#2f323c;font-weight:normal;transform:scaleX(0.7945)">SPY</div>
<div class="t" style="left:982.44px;top:77.70px;font-size:8.2px;color:#2a2e39;font-weight:normal;transform:scaleX(0.9272)">555.19</div>
<div class="t" style="left:982.15px;top:85.60px;font-size:8.0px;color:#50535e;font-weight:normal;transform:scaleX(0.9409)">05:23:57</div>
<div class="t" style="left:962.55px;top:401.60px;font-size:8.0px;color:#ece6f7;font-weight:normal;transform:scaleX(0.8393)">RSI</div>
<div class="t" style="left:982.25px;top:401.60px;font-size:8.0px;color:#ece6f7;font-weight:normal;transform:scaleX(0.9585)">75.15</div>
<div class="t" style="left:928.25px;top:411.90px;font-size:8.0px;color:#1d1f25;font-weight:normal;transform:scaleX(0.8629)">RSI-based MA</div>
<div class="t" style="left:982.25px;top:411.90px;font-size:8.0px;color:#1d1f25;font-weight:normal;transform:scaleX(0.9585)">70.09</div>
<div class="t ns" style="left:45.25px;top:533.30px;font-size:7.4px;color:#b2b5be;font-weight:normal;transform:scaleX(1.0000)">Oct</div>
<div class="t ns" style="left:135.17px;top:533.30px;font-size:7.4px;color:#b2b5be;font-weight:normal;transform:scaleX(1.0000)">Nov</div>
<div class="t ns" style="left:222.17px;top:533.30px;font-size:7.4px;color:#b2b5be;font-weight:normal;transform:scaleX(1.0000)">Dec</div>
<div class="t ns" style="left:303.27px;top:533.30px;font-size:7.4px;color:#b2b5be;font-weight:bold;transform:scaleX(1.0000)">2024</div>
<div class="t ns" style="left:392.12px;top:533.30px;font-size:7.4px;color:#b2b5be;font-weight:normal;transform:scaleX(1.0000)">Feb</div>
<div class="t ns" style="left:474.63px;top:533.30px;font-size:7.4px;color:#b2b5be;font-weight:normal;transform:scaleX(1.0000)">Mar</div>
<div class="t ns" style="left:557.74px;top:533.30px;font-size:7.4px;color:#b2b5be;font-weight:normal;transform:scaleX(1.0000)">Apr</div>
<div class="t ns" style="left:647.52px;top:533.30px;font-size:7.4px;color:#b2b5be;font-weight:normal;transform:scaleX(1.0000)">May</div>
<div class="t ns" style="left:739.79px;top:533.30px;font-size:7.4px;color:#b2b5be;font-weight:normal;transform:scaleX(1.0000)">Jun</div>
<div class="t ns" style="left:819.27px;top:533.30px;font-size:7.4px;color:#b2b5be;font-weight:normal;transform:scaleX(1.0000)">Jul</div>
<div class="t ns" style="left:908.92px;top:533.30px;font-size:7.4px;color:#b2b5be;font-weight:normal;transform:scaleX(1.0000)">Aug</div>
</body></html>
